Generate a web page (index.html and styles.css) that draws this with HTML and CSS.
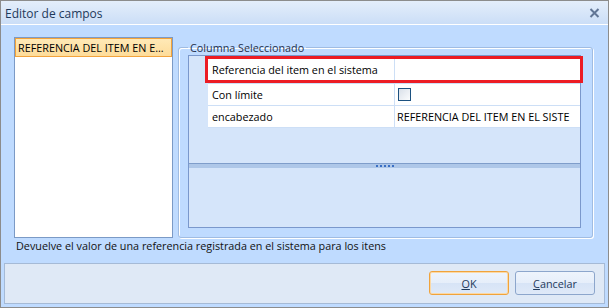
FILE: index.html
```html
<!DOCTYPE html>
<html lang="es">

<head>
    <meta charset="UTF-8">
    <meta name="viewport" content="width=device-width, initial-scale=1.0">
    <title>Editor de campos</title>
    <link rel="stylesheet" href="styles.css">
</head>

<body>
    <div class="window">
        <div class="titlebar">
            <span class="title">Editor de campos</span>
            <svg class="close" width="11" height="10" viewBox="0 0 11 10">
                <path d="M1.5 1 L9.5 9 M9.5 1 L1.5 9" stroke="#627695" stroke-width="2" fill="none" />
            </svg>
        </div>

        <div class="content">
            <div class="main">
                <!-- Lista de columnas -->
                <div class="column-list">
                    <div class="column-item selected">REFERENCIA DEL ITEM EN E...</div>
                </div>

                <!-- Propiedades de la columna -->
                <fieldset class="group">
                    <legend>Columna Seleccionado</legend>
                    <div class="prop-grid">
                        <div class="props">
                            <div class="prop-row first">
                                <div class="prop-name">Referencia del item en el sistema</div>
                                <div class="prop-value"></div>
                                <span class="mark"></span>
                            </div>
                            <div class="prop-row">
                                <div class="prop-name">Con límite</div>
                                <div class="prop-value"><span class="checkbox"></span></div>
                            </div>
                            <div class="prop-row">
                                <div class="prop-name">encabezado</div>
                                <div class="prop-value">REFERENCIA DEL ITEM EN EL SISTE</div>
                            </div>
                        </div>
                        <div class="splitter"><span class="grip"></span></div>
                        <div class="description"></div>
                    </div>
                </fieldset>
            </div>

            <p class="status">Devuelve el valor de una referencia registrada en el sistema para los itens</p>

            <div class="footer">
                <button class="btn default"><u>O</u>K</button>
                <button class="btn"><u>C</u>ancelar</button>
            </div>
        </div>
    </div>
</body>

</html>
```

FILE: styles.css
```css
body {
    margin: 0;
    padding: 0;
    font-family: "Open Sans", "Noto Sans", sans-serif;
    font-size: 10.8px;
    color: #000;
    background-color: #fff;
}

.window {
    width: 609px;
    height: 308px;
    box-sizing: border-box;
    border: 1px solid #8c8c8c;
    background-color: #bfdbff;
    display: flex;
    flex-direction: column;
}

.titlebar {
    height: 24px;
    box-sizing: border-box;
    border-bottom: 1px solid #fff;
    background: linear-gradient(#e4eefb, #cbdef7);
    display: flex;
    align-items: center;
    justify-content: space-between;
    padding: 1px 8px 0 4px;
}

.title {
    font-size: 12px;
    color: #1e395b;
}

.close {
    display: block;
}

.content {
    flex: 1;
    display: flex;
    flex-direction: column;
}

.main {
    display: flex;
    align-items: flex-start;
    gap: 5px;
    margin: 12px 0 0 13px;
    height: 201px;
}

/* Lista de la izquierda */
.column-list {
    width: 159px;
    height: 201px;
    box-sizing: border-box;
    border: 1px solid #7b9ac6;
    background-color: #fff;
}

.column-item {
    height: 19px;
    line-height: 17px;
    padding: 0 2px;
    white-space: nowrap;
    overflow: hidden;
    box-sizing: border-box;
}

.column-item.selected {
    border: 1px solid #f2a33c;
    background: linear-gradient(#ffe9b6, #fddc9a);
}

/* Grupo */
.group {
    width: 415px;
    height: 198px;
    box-sizing: border-box;
    margin: 3px 0 0 0;
    padding: 0 11px 9px 9px;
    border: 1px solid #a0bce2;
    border-radius: 3px;
    box-shadow: inset 1px 1px 0 #fff, 1px 1px 0 #fff;
    min-width: 0;
}

.group legend {
    line-height: 15px;
    padding: 0 2px;
    color: #1e2f4a;
}

.prop-grid {
    height: 173px;
    box-sizing: border-box;
    border: 1px solid #7a98cc;
    background-color: #d5e5fa;
    display: flex;
    flex-direction: column;
}

.props {
    height: 107px;
    padding-left: 19px;
}

.prop-row {
    position: relative;
    display: flex;
    height: 22px;
    box-sizing: border-box;
    border-bottom: 1px solid #cddff6;
    background-color: #fff;
}

.prop-row.first {
    height: 28px;
}

.prop-name {
    width: 187px;
    border-right: 1px solid #cddff6;
    padding-left: 4px;
    box-sizing: border-box;
    display: flex;
    align-items: center;
}

.prop-value {
    flex: 1;
    padding-left: 2px;
    display: flex;
    align-items: center;
    white-space: nowrap;
    overflow: hidden;
}

/* Recuadro rojo sobre la primera fila */
.mark {
    position: absolute;
    left: -3px;
    top: 0;
    right: -3px;
    bottom: 0;
    border: 3px solid #ec1c24;
}

.checkbox {
    width: 13px;
    height: 13px;
    box-sizing: border-box;
    margin-left: 1px;
    border: 1px solid #1c5180;
    background: linear-gradient(135deg, #d9e0e9, #fbfcfd);
}

.splitter {
    height: 5px;
    box-sizing: border-box;
    border-top: 1px solid #7f9dca;
    background-color: #aec7e8;
    display: flex;
    justify-content: flex-end;
    padding-right: 186px;
}

.grip {
    width: 18px;
    height: 2px;
    margin-top: 1px;
    background: repeating-linear-gradient(90deg, #3a6fc4 0 2px, transparent 2px 4px);
}

.description {
    flex: 1;
    background-color: #d5e5fa;
}

.status {
    margin: 0 0 0 15px;
    line-height: 16px;
    height: 16px;
    color: #111;
}

.footer {
    margin: 9px 3px 3px 3px;
    height: 41px;
    box-sizing: border-box;
    border: 1px solid #a5bad6;
    background-color: #dfe9f6;
    display: flex;
    justify-content: flex-end;
    align-items: flex-start;
    gap: 6px;
    padding: 7px 9px 0 0;
}

.btn {
    width: 80px;
    height: 24px;
    border: 1px solid #8ca6cc;
    border-radius: 3px;
    background: linear-gradient(#eef4fc 0%, #e6eefa 50%, #d7e4f6 51%, #dfe9f8 100%);
    font-family: "Open Sans", "Noto Sans", sans-serif;
    font-size: 10.8px;
    color: #1e395b;
    padding: 0;
    cursor: pointer;
}

.btn.default {
    border-color: #f0a33c;
    box-shadow: inset 0 0 0 1px #fbd9a6;
}
```
